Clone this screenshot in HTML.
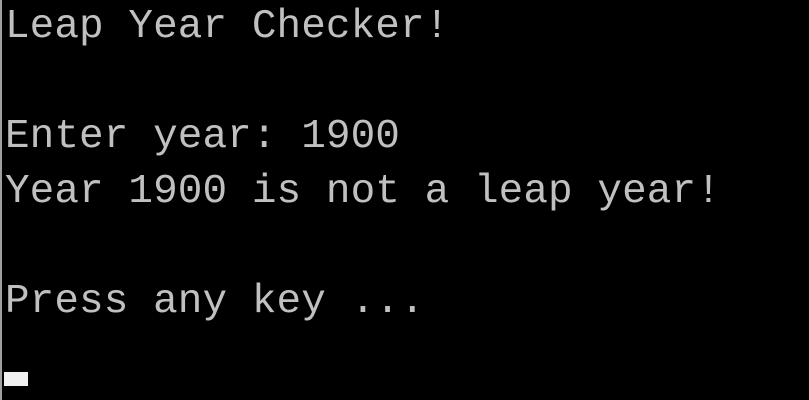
<!DOCTYPE html>
<html><head><style>
html,body{margin:0;padding:0;background:#000;width:809px;height:400px;overflow:hidden}
.bar{position:absolute;left:0;top:0;width:2px;height:400px;background:#a0a0a0}
pre{position:absolute;left:5px;top:0;margin:0;font-family:"Liberation Mono",monospace;font-size:41px;line-height:55px;color:#c0c0c0;letter-spacing:0.08px}
.cur{position:absolute;left:4px;top:372px;width:24px;height:14px;background:#f0f0f0}
</style></head><body>
<div class="bar"></div>
<pre>Leap Year Checker!

Enter year: 1900
Year 1900 is not a leap year!

Press any key ...</pre>
<div class="cur"></div>
</body></html>
